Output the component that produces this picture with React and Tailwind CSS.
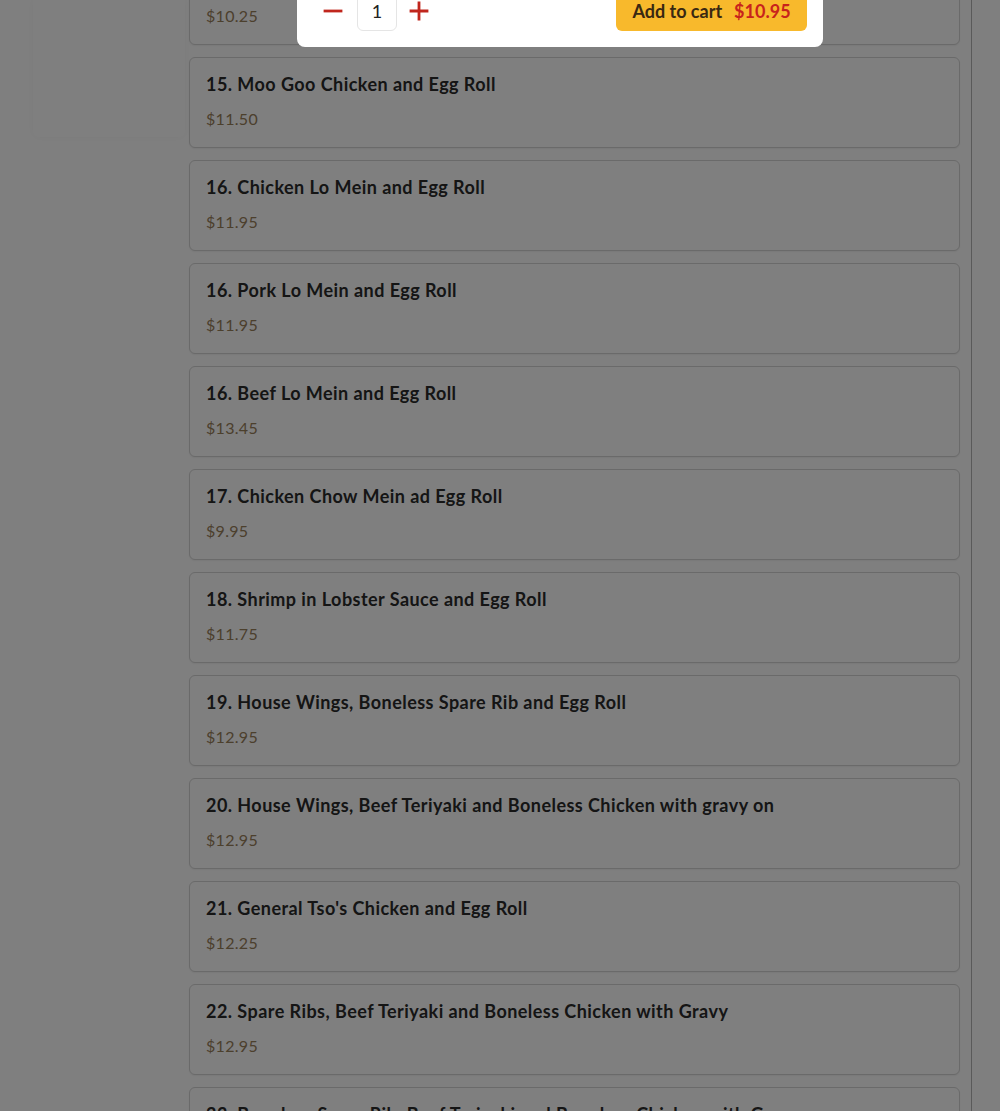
import React from "react";

const items = [
  { name: "14. Sweet and Sour Chicken and Egg Roll", price: "$10.25" },
  { name: "15. Moo Goo Chicken and Egg Roll", price: "$11.50" },
  { name: "16. Chicken Lo Mein and Egg Roll", price: "$11.95" },
  { name: "16. Pork Lo Mein and Egg Roll", price: "$11.95" },
  { name: "16. Beef Lo Mein and Egg Roll", price: "$13.45" },
  { name: "17. Chicken Chow Mein ad Egg Roll", price: "$9.95" },
  { name: "18. Shrimp in Lobster Sauce and Egg Roll", price: "$11.75" },
  { name: "19. House Wings, Boneless Spare Rib and Egg Roll", price: "$12.95" },
  { name: "20. House Wings, Beef Teriyaki and Boneless Chicken with gravy on", price: "$12.95" },
  { name: "21. General Tso's Chicken and Egg Roll", price: "$12.25" },
  { name: "22. Spare Ribs, Beef Teriyaki and Boneless Chicken with Gravy", price: "$12.95" },
  { name: "23. Boneless Spare Rib, Beef Teriyaki and Boneless Chicken with Gravy", price: "$12.95" },
];

export default function App() {
  return (
    <div
      className="relative h-[1111px] w-full overflow-hidden bg-white"
      style={{ fontFamily: "Lato, 'Noto Sans', sans-serif" }}
    >
      <div className="flex">
        <aside className="w-[189px] shrink-0 pl-[33px] pr-[4px]">
          <div className="h-[137px] rounded-b-md bg-white shadow-[0_0_8px_rgba(0,0,0,0.04)]" />
        </aside>
        <main className="w-[783px] shrink-0 border-r border-[#b5b5b5] pr-[11px]">
          <div className="-mt-[46px] flex flex-col gap-[12px]">
            {items.map((it, i) => (
              <div
                key={i}
                className="h-[91px] rounded-md border border-[#d4d4d4] bg-white px-4 pt-4 shadow-[0_1px_2px_rgba(0,0,0,0.06)]"
              >
                <div className="text-[18px] font-bold leading-[20px] tracking-[0.45px] text-[#2a2a2a]">
                  {it.name}
                </div>
                <div className="mt-[13px] text-[16px] leading-[24px] tracking-[0.3px] text-[#98805a]">
                  {it.price}
                </div>
              </div>
            ))}
          </div>
        </main>
        <div className="flex-1" />
      </div>

      <div className="fixed inset-0 bg-black/50" />

      <div className="absolute left-[297px] top-[-20px] flex h-[67px] w-[526px] items-end justify-between rounded-b-lg bg-white pb-4 pl-5 pr-4">
        <div className="flex items-center">
          <button className="flex h-[32px] w-[32px] items-center justify-center text-[#c0261d]">
            <svg width="20" height="20" viewBox="0 0 20 20">
              <path d="M2 10h16" stroke="currentColor" strokeWidth="2.8" strokeLinecap="square" />
            </svg>
          </button>
          <div className="ml-2 flex h-[40px] w-[40px] items-center justify-center rounded-md border border-[#e5e5e5] text-[18px] text-[#222]">
            1
          </div>
          <button className="ml-[6px] flex h-[32px] w-[32px] items-center justify-center text-[#c0261d]">
            <svg width="20" height="20" viewBox="0 0 20 20">
              <path d="M2 10h16M10 2v16" stroke="currentColor" strokeWidth="2.8" strokeLinecap="square" />
            </svg>
          </button>
        </div>
        <button className="flex h-[40px] w-[191px] items-center justify-center gap-3 rounded-md bg-[#f8b92c] text-[18px] font-bold">
          <span className="text-[#3a2812]">Add to cart</span>
          <span className="text-[#c8231c]">$10.95</span>
        </button>
      </div>
    </div>
  );
}
